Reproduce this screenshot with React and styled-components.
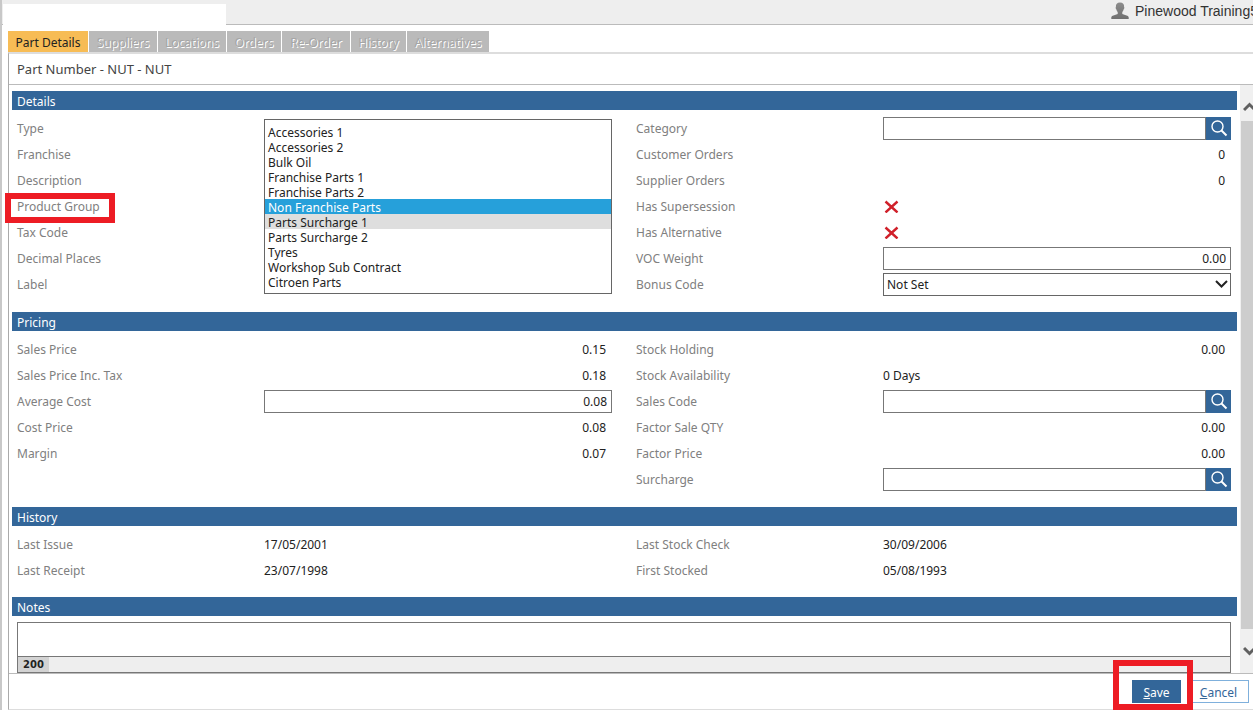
import React, { useState } from 'react';
import styled, { createGlobalStyle } from 'styled-components';

const GlobalStyle = createGlobalStyle`
  * {
    box-sizing: border-box;
  }

  body {
    margin: 0;
    background-color: #ffffff;
    font-family: 'Noto Sans', 'DejaVu Sans Condensed', sans-serif;
    font-size: 12px;
    color: #222222;
    overflow: hidden;
  }

  input, select, textarea, button {
    font: inherit;
    color: inherit;
    border-radius: 0;
    outline: none;
  }
`;

const Page = styled.div`
  display: flex;
  flex-direction: column;
  min-height: 100vh;
  border-left: 2px solid #c8c8c8;
`;

const Header = styled.header`
  display: flex;
  justify-content: space-between;
  height: 25px;
  padding-left: 1px;
  background-color: #eeeeee;
  border-bottom: 1px solid #bbbbbb;
`;

const BlankTab = styled.div`
  width: 223px;
  margin: 4px 0 -1px;
  background-color: #ffffff;
`;

const User = styled.div`
  display: flex;
  align-items: center;
  gap: 6px;
  width: 142px;
  padding-bottom: 2px;
  overflow: hidden;
  white-space: nowrap;
  font-family: 'Liberation Sans', Arial, sans-serif;
  font-size: 14px;
  color: #333333;

  svg {
    flex: none;
  }
`;

const Tabs = styled.nav`
  display: flex;
  gap: 1px;
  padding: 6px 0 0 6px;
`;

const Tab = styled.button`
  height: 21px;
  width: ${(props) => props.$width}px;
  padding: 2px 0 0;
  border: none;
  white-space: nowrap;
  background-color: #f7bc55;

  &:disabled {
    background-color: #bababa;
    color: #a6a6a6;
    text-shadow: 1px 1px 0 #ffffff;
  }
`;

const Panel = styled.main`
  display: flex;
  flex: 1;
  flex-direction: column;
  margin-left: 6px;
  border-top: 2px solid #dddddd;
  border-left: 1px solid #aaaaaa;
  border-bottom: 1px solid #dddddd;
`;

const Title = styled.h1`
  height: 31px;
  margin: 0;
  padding-left: 8px;
  border-bottom: 1px solid #bbbbbb;
  font-size: 13px;
  font-weight: normal;
  line-height: 30px;
  color: #444444;
`;

const Scroller = styled.div`
  display: flex;
  flex: 1;
`;

const Form = styled.form`
  flex: 1;
  padding: 6px 3px 0;
`;

const Bar = styled.h2`
  height: 19px;
  margin: 0;
  padding-left: 5px;
  background-color: #336699;
  color: #ffffff;
  font-size: 12px;
  font-weight: normal;
  line-height: 22px;
`;

const Columns = styled.div`
  display: grid;
  grid-template-columns: 1fr 1fr;
  column-gap: 24px;
  padding: 5px 6px ${(props) => props.$bottom || 15}px 5px;
`;

const Fields = styled.div`
  display: grid;
  grid-template-columns: 247px 1fr;
  grid-auto-rows: 26px;
  align-items: center;
  align-content: start;
`;

const Label = styled.label`
  grid-column: 1;
  color: #808080;
`;

const Marked = styled.span`
  display: inline-flex;
  position: relative;

  &::after {
    content: '';
    position: absolute;
    inset: ${(props) => props.$inset};
    border: 6px solid #ed1c24;
    pointer-events: none;
  }
`;

const Value = styled.output`
  grid-column: 2;
  padding-right: ${(props) => (props.$right ? 6 : 0)}px;
  text-align: ${(props) => (props.$right ? 'right' : 'left')};

  svg {
    display: block;
  }
`;

const TextInput = styled.input`
  width: 100%;
  height: 23px;
  min-width: 0;
  padding: 0 4px;
  border: 1px solid #777777;
  background-color: #ffffff;
  text-align: ${(props) => (props.$right ? 'right' : 'left')};
`;

const LookupBox = styled.div`
  display: flex;
`;

const LookupButton = styled.button`
  display: flex;
  flex: none;
  align-items: center;
  justify-content: center;
  width: 25px;
  height: 23px;
  padding: 0;
  border: none;
  background-color: #336699;
`;

const SelectBox = styled.div`
  position: relative;

  svg {
    position: absolute;
    top: 6px;
    right: 3px;
    pointer-events: none;
  }
`;

const DropDown = styled.select`
  display: block;
  width: 100%;
  height: 23px;
  padding: 0 3px;
  border: 1px solid #666666;
  background-color: #ffffff;
  appearance: none;
`;

const OptionList = styled.select`
  grid-column: 2;
  grid-row: 1 / span 7;
  align-self: end;
  width: 100%;
  height: 175px;
  margin-bottom: 3px;
  padding: 4px 0;
  border: 1px solid #666666;
  background-color: #ffffff;
  overflow: hidden;
`;

const Option = styled.option`
  height: 15px;
  min-height: 15px;
  padding: 0 3px;
  line-height: 16px;
  color: ${(props) => (props.$hot ? '#ffffff' : '#222222')};
  background-color: ${(props) => (props.$hot ? '#26a0da' : '#ffffff')};

  &:checked {
    background-image: linear-gradient(#dedede, #dedede);
  }
`;

const Notes = styled.div`
  margin: 6px 6px 0 5px;
  border: 1px solid #777777;
`;

const NotesText = styled.textarea`
  display: block;
  width: 100%;
  height: 33px;
  padding: 4px;
  border: none;
  resize: none;
`;

const Counter = styled.div`
  display: flex;
  height: 16px;
  border-top: 1px solid #777777;
  background-color: #eeeeee;

  span {
    width: 31px;
    background-color: #d3d3d3;
    font-family: 'DejaVu Sans', sans-serif;
    font-size: 10px;
    font-weight: bold;
    line-height: 16px;
    text-align: center;
  }
`;

const ScrollTrack = styled.div`
  display: flex;
  flex-direction: column;
  width: 13px;
  padding-left: 1px;
  background-color: #f0f0f0;
  overflow: hidden;
`;

const ScrollArrow = styled.button`
  display: flex;
  align-items: center;
  height: ${(props) => props.$height}px;
  padding: ${(props) => props.$top || 0}px 0 0 2px;
  border: none;
  background: none;

  svg {
    flex: none;
  }
`;

const ScrollThumb = styled.div`
  flex: 1;
  background-color: #cdcdcd;
`;

const Footer = styled.footer`
  display: flex;
  justify-content: flex-end;
  gap: 7px;
  padding: 6px 4px 6px;
  border-top: 1px solid #bbbbbb;
`;

const Button = styled.button`
  height: 23px;
  width: ${(props) => (props.$primary ? 49 : 61)}px;
  padding: 2px 0 0;
  border: 1px solid ${(props) => (props.$primary ? '#336699' : '#7fb0dc')};
  background-color: ${(props) => (props.$primary ? '#336699' : '#ffffff')};
  color: ${(props) => (props.$primary ? '#ffffff' : '#336699')};
`;

const UserIcon = () => (
  <svg width="18" height="18" viewBox="0 0 18 18">
    <defs>
      <linearGradient id="user-fill" x1="0" y1="0" x2="0" y2="1">
        <stop offset="0" stopColor="#8c8c8c" />
        <stop offset="1" stopColor="#707070" />
      </linearGradient>
    </defs>
    <path
      fill="url(#user-fill)"
      d="M9 0.500c2.900 0 4.300 1.700 4.100 4.500 0.500 0.500 0.300 1.700-0.400 2.200-0.300 1.300-0.800 2.100-1.400 2.800v2l5 1.700c0.900 0.300 1.300 0.900 1.400 1.800v1.500H0.300v-1.500c0.100-0.900 0.500-1.500 1.400-1.800l5-1.700v-2c-0.600-0.700-1.100-1.500-1.400-2.800-0.700-0.500-0.900-1.700-0.400-2.200C4.700 2.200 6.100 0.500 9 0.500z"
    />
  </svg>
);

const SearchIcon = () => (
  <svg width="18" height="18" viewBox="0 0 18 18" fill="none" stroke="#ffffff">
    <circle cx="7.500" cy="7.500" r="5.500" strokeWidth="1.400" />
    <path d="M11.500 11.500l5 5" strokeWidth="1.900" />
  </svg>
);

const CrossIcon = () => (
  <svg width="17" height="14" viewBox="0 0 17 14" fill="none" stroke="#d0202a" strokeWidth="2.400">
    <path d="M2.500 2.500l12 11M14.500 2.500l-12 11" />
  </svg>
);

const Chevron = ({ up, color = '#606060', width = 3 }) => (
  <svg width="13" height="10" viewBox="0 0 13 10" fill="none" stroke={color} strokeWidth={width}>
    <path d={up ? 'M1 8l5.500-5.500L12 8' : 'M1 2l5.500 5.500L12 2'} />
  </svg>
);

const Field = ({ id, label, value, kind, right }) => {
  const [text, setText] = useState(value || '');
  const change = (e) => setText(e.target.value);

  return (
    <>
      <Label htmlFor={id}>{label}</Label>
      {kind === 'lookup' && (
        <LookupBox>
          <TextInput id={id} value={text} onChange={change} />
          <LookupButton type="button" aria-label={`Find ${label}`}>
            <SearchIcon />
          </LookupButton>
        </LookupBox>
      )}
      {kind === 'input' && <TextInput id={id} value={text} onChange={change} $right />}
      {kind === 'select' && (
        <SelectBox>
          <DropDown id={id} value={text} onChange={change}>
            <option>{value}</option>
          </DropDown>
          <Chevron color="#222222" width={2} />
        </SelectBox>
      )}
      {kind === 'cross' && (
        <Value id={id} aria-label="No">
          <CrossIcon />
        </Value>
      )}
      {!kind && value && <Value id={id} $right={right}>{value}</Value>}
    </>
  );
};

const tabs = [
  ['Part Details', 80],
  ['Suppliers', 68],
  ['Locations', 68],
  ['Orders', 54],
  ['Re-Order', 68],
  ['History', 55],
  ['Alternatives', 82],
];

const productGroups = [
  'Accessories 1',
  'Accessories 2',
  'Bulk Oil',
  'Franchise Parts 1',
  'Franchise Parts 2',
  'Non Franchise Parts',
  'Parts Surcharge 1',
  'Parts Surcharge 2',
  'Tyres',
  'Workshop Sub Contract',
  'Citroen Parts',
];

const ProductGroupList = () => {
  const [group, setGroup] = useState('Parts Surcharge 1');

  return (
    <OptionList id="product-group" size={11} value={group} onChange={(e) => setGroup(e.target.value)}>
      {productGroups.map((name) => (
        <Option key={name} $hot={name === 'Non Franchise Parts'}>{name}</Option>
      ))}
    </OptionList>
  );
};

const App = () => {
  const [notes, setNotes] = useState('');

  return (
    <Page>
      <GlobalStyle />
      <Header>
        <BlankTab />
        <User>
          <UserIcon />
          <span>Pinewood Training5</span>
        </User>
      </Header>

      <Tabs>
        {tabs.map(([name, width], index) => (
          <Tab key={name} type="button" $width={width} disabled={index > 0}>{name}</Tab>
        ))}
      </Tabs>

      <Panel>
        <Title>Part Number - NUT - NUT</Title>
        <Scroller>
          <Form id="part" onSubmit={(e) => e.preventDefault()}>
            <Bar>Details</Bar>
            <Columns>
              <Fields>
                <Label>Type</Label>
                <Label>Franchise</Label>
                <Label>Description</Label>
                <Label htmlFor="product-group">
                  <Marked $inset="-5px -15px -8px -12px">Product Group</Marked>
                </Label>
                <Label>Tax Code</Label>
                <Label>Decimal Places</Label>
                <Label>Label</Label>
                <ProductGroupList />
              </Fields>
              <Fields>
                <Field id="category" label="Category" kind="lookup" />
                <Field id="customer-orders" label="Customer Orders" value="0" right />
                <Field id="supplier-orders" label="Supplier Orders" value="0" right />
                <Field id="supersession" label="Has Supersession" kind="cross" />
                <Field id="alternative" label="Has Alternative" kind="cross" />
                <Field id="voc-weight" label="VOC Weight" value="0.00" kind="input" />
                <Field id="bonus-code" label="Bonus Code" value="Not Set" kind="select" />
              </Fields>
            </Columns>

            <Bar>Pricing</Bar>
            <Columns>
              <Fields>
                <Field id="sales-price" label="Sales Price" value="0.15" right />
                <Field id="sales-price-tax" label="Sales Price Inc. Tax" value="0.18" right />
                <Field id="average-cost" label="Average Cost" value="0.08" kind="input" />
                <Field id="cost-price" label="Cost Price" value="0.08" right />
                <Field id="margin" label="Margin" value="0.07" right />
              </Fields>
              <Fields>
                <Field id="stock-holding" label="Stock Holding" value="0.00" right />
                <Field id="stock-availability" label="Stock Availability" value="0 Days" />
                <Field id="sales-code" label="Sales Code" kind="lookup" />
                <Field id="factor-qty" label="Factor Sale QTY" value="0.00" right />
                <Field id="factor-price" label="Factor Price" value="0.00" right />
                <Field id="surcharge" label="Surcharge" kind="lookup" />
              </Fields>
            </Columns>

            <Bar>History</Bar>
            <Columns $bottom={14}>
              <Fields>
                <Field id="last-issue" label="Last Issue" value="17/05/2001" />
                <Field id="last-receipt" label="Last Receipt" value="23/07/1998" />
              </Fields>
              <Fields>
                <Field id="last-check" label="Last Stock Check" value="30/09/2006" />
                <Field id="first-stocked" label="First Stocked" value="05/08/1993" />
              </Fields>
            </Columns>

            <Bar id="notes-title">Notes</Bar>
            <Notes>
              <NotesText
                aria-labelledby="notes-title"
                maxLength={200}
                value={notes}
                onChange={(e) => setNotes(e.target.value)}
              />
              <Counter>
                <span>{200 - notes.length}</span>
              </Counter>
            </Notes>
          </Form>

          <ScrollTrack>
            <ScrollArrow type="button" aria-label="Scroll up" $height={36} $top={8}>
              <Chevron up />
            </ScrollArrow>
            <ScrollThumb />
            <ScrollArrow type="button" aria-label="Scroll down" $height={44}>
              <Chevron />
            </ScrollArrow>
          </ScrollTrack>
        </Scroller>

        <Footer>
          <Marked $inset="-20px -12px -7px -19px">
            <Button type="submit" form="part" $primary><u>S</u>ave</Button>
          </Marked>
          <Button type="button"><u>C</u>ancel</Button>
        </Footer>
      </Panel>
    </Page>
  );
};

export default App;
